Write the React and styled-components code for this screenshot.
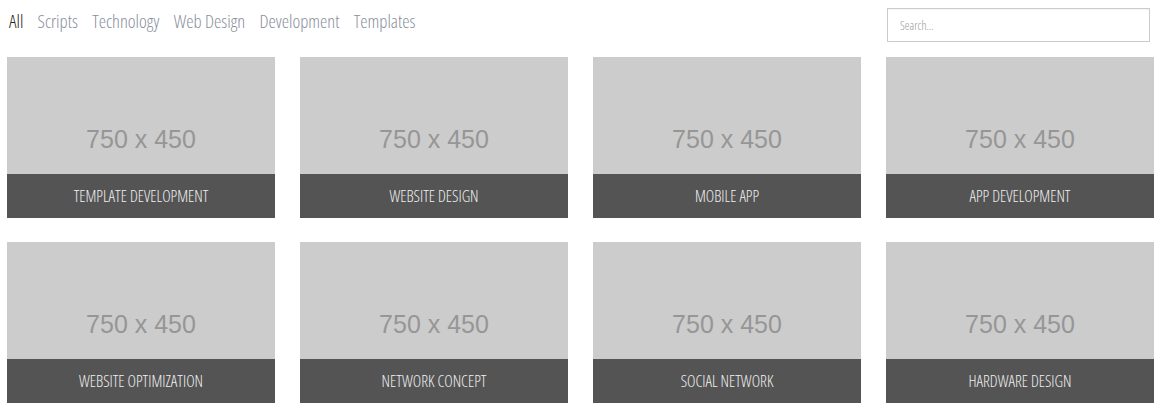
import React, { useState } from "react"
import styled, { createGlobalStyle } from "styled-components"

const GlobalStyle = createGlobalStyle`
  body {
    margin: 0;
    background: #fff;
    font-family: "Open Sans", sans-serif;
    font-stretch: condensed;
  }
`

const categories = ["All", "Scripts", "Technology", "Web Design", "Development", "Templates"]

const projects = [
  "Template Development",
  "Website Design",
  "Mobile App",
  "App Development",
  "Website Optimization",
  "Network Concept",
  "Social Network",
  "Hardware Design",
]

const App = () => {
  const [active, setActive] = useState("All")
  return (
    <Page>
      <GlobalStyle />
      <Toolbar>
        <Filters>
          {categories.map((c) => (
            <FilterItem key={c} $active={c === active} onClick={() => setActive(c)}>
              {c}
            </FilterItem>
          ))}
        </Filters>
        <SearchInput placeholder="Search..." />
      </Toolbar>
      <Grid>
        {projects.map((p) => (
          <Card key={p}>
            <Thumb>750 x 450</Thumb>
            <Caption>{p}</Caption>
          </Card>
        ))}
      </Grid>
    </Page>
  )
}

export default App

const Page = styled.div`
  padding: 8px 0 0 7px;
  width: 1154px;
`

const Toolbar = styled.div`
  display: flex;
  align-items: center;
  justify-content: space-between;
  height: 34px;
  margin-bottom: 15px;
  padding-right: 11px;
`

const Filters = styled.div`
  display: flex;
  gap: 14.3px;
  padding-left: 2px;
  margin-top: -9px;
`

const FilterItem = styled.span`
  font-size: 18.5px;
  font-weight: 300;
  color: ${(p) => (p.$active ? "#222" : "#8a8f9c")};
  cursor: pointer;
`

const SearchInput = styled.input`
  box-sizing: border-box;
  width: 263px;
  height: 34px;
  border: 1px solid #ccc;
  padding: 0 12px;
  font-family: inherit;
  font-stretch: condensed;
  font-weight: 300;
  font-size: 12px;
  color: #555;
  outline: none;
  box-shadow: inset 0 1px 1px rgba(0, 0, 0, 0.05);
  &::placeholder {
    color: #999;
  }
`

const Grid = styled.div`
  display: grid;
  grid-template-columns: repeat(4, 268px);
  column-gap: 25px;
  row-gap: 24px;
`

const Card = styled.div`
  position: relative;
  height: 161px;
  overflow: hidden;
`

const Thumb = styled.div`
  height: 161px;
  padding-top: 3px;
  box-sizing: border-box;
  background: #cccccc;
  color: #969696;
  display: flex;
  align-items: center;
  justify-content: center;
  font-family: "Liberation Sans", Arial, sans-serif;
  font-stretch: normal;
  font-size: 25px;
`

const Caption = styled.div`
  position: absolute;
  left: 0;
  right: 0;
  bottom: 0;
  height: 44px;
  box-sizing: border-box;
  background: #545454;
  color: #f0f0f0;
  display: flex;
  align-items: center;
  justify-content: center;
  text-transform: uppercase;
  font-weight: 300;
  font-size: 16px;
`
